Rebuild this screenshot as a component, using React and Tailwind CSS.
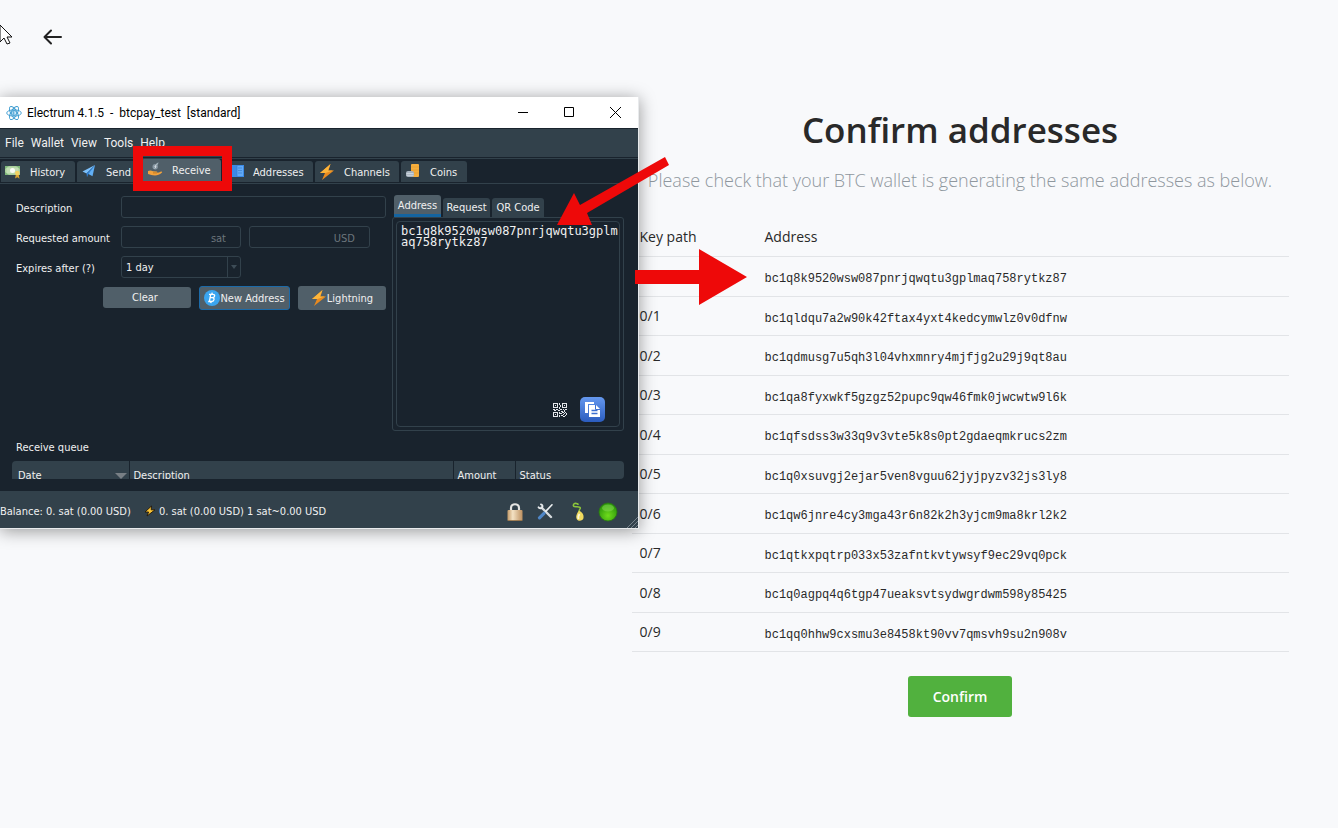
const addresses = [
  'bc1q8k9520wsw087pnrjqwqtu3gplmaq758rytkz87',
  'bc1qldqu7a2w90k42ftax4yxt4kedcymwlz0v0dfnw',
  'bc1qdmusg7u5qh3l04vhxmnry4mjfjg2u29j9qt8au',
  'bc1qa8fyxwkf5gzgz52pupc9qw46fmk0jwcwtw9l6k',
  'bc1qfsdss3w33q9v3vte5k8s0pt2gdaeqmkrucs2zm',
  'bc1q0xsuvgj2ejar5ven8vguu62jyjpyzv32js3ly8',
  'bc1qw6jnre4cy3mga43r6n82k2h3yjcm9ma8krl2k2',
  'bc1qtkxpqtrp033x53zafntkvtywsyf9ec29vq0pck',
  'bc1q0agpq4q6tgp47ueaksvtsydwgrdwm598y85425',
  'bc1qq0hhw9cxsmu3e8458kt90vv7qmsvh9su2n908v',
];

/* ---------- Icons ---------- */

const BackIcon = () => (
  <svg width="19" height="16" viewBox="0 0 19 16" fill="none" stroke="#222" strokeWidth="2" strokeLinecap="round" strokeLinejoin="round">
    <path d="M18 8H2M8 1.500L1.500 8 8 14.500" />
  </svg>
);

const ElectrumIcon = () => (
  <svg width="16" height="16" viewBox="0 0 16 16" fill="none" stroke="#3b9bd0" strokeWidth="0.9">
    <ellipse cx="8" cy="8" rx="7.3" ry="3.2" />
    <ellipse cx="8" cy="8" rx="7.3" ry="3.2" transform="rotate(60 8 8)" />
    <ellipse cx="8" cy="8" rx="7.3" ry="3.2" transform="rotate(120 8 8)" />
    <circle cx="8" cy="8" r="2.6" fill="#d8eefa" />
    <path d="M7.2 6.6v2.8M7.2 6.7h1.2M7.2 8h1.4M7.2 9.3h1.4" strokeWidth="0.8" />
  </svg>
);

const HistoryIcon = () => (
  <svg width="16" height="16" viewBox="0 0 16 16">
    <rect x="0" y="2" width="15" height="9" fill="#a9cf9c" />
    <rect x="1.5" y="3.5" width="12" height="6" fill="#c3dfb5" />
    <circle cx="7.5" cy="6.5" r="2.5" fill="#fbfdf8" />
    <path d="M0 2h4L0 5zM15 2h-4l4 3zM0 11h4L0 8z" fill="#7fb87a" />
    <path d="M11 10l-1 4.5 2.3-1.2 2.2 1.4-.8-4.7z" fill="#d9a32f" />
    <circle cx="12.3" cy="9" r="2.3" fill="#f2d264" />
  </svg>
);

const SendIcon = () => (
  <svg width="16" height="16" viewBox="0 0 16 16">
    <path d="M14 1L1.500 7.500l4 2z" fill="#7cc0fb" />
    <path d="M14 1L6.500 9.500l5 2.800z" fill="#62b0f6" />
    <path d="M5.500 9.500L14 1 7.300 10.300l-1.300 3z" fill="#2f7fd2" />
  </svg>
);

const ReceiveIcon = () => (
  <svg width="16" height="16" viewBox="0 0 16 16">
    <path d="M8 2.500L11.500.3l-.6 2.500z" fill="#9fb0bb" />
    <circle cx="8.200" cy="4.800" r="2.700" fill="#8797a3" />
    <path d="M9.500 2.500L7.800 4.600h1.300L7.800 6.500" stroke="#e2e8ec" strokeWidth="0.8" fill="none" />
    <path d="M1 9c2-1 3.400-.6 5 .3l3.500.3c1 .1 1 1 0 1.200l2.500-.2 2-1c1.200-.3 1.500.7.8 1.200-2.300 1.800-4.300 2.600-6.800 2.600-3 0-4.500-1-7-1.500z" fill="#f2a23c" />
    <path d="M6 10.900h4" stroke="#b8701b" strokeWidth="0.8" />
  </svg>
);

const AddressesIcon = () => (
  <svg width="16" height="16" viewBox="0 0 16 16">
    <rect x="1" y="1" width="15" height="12" fill="#3b8ae6" />
    <rect x="9" y="2" width="6" height="10" fill="#62aaf6" />
    <path d="M9 1v12M10 4h4M10 6.500h4M10 9h4" stroke="#3a7fd0" strokeWidth="0.7" />
  </svg>
);

const BoltIcon = () => (
  <svg width="16" height="16" viewBox="0 0 16 16">
    <path d="M11.500 0L1 9h5l-3 7L15 6.500H9.500z" fill="#e98a1f" />
    <path d="M11.500 0L1 9h5.500L14 6.500H9z" fill="#fcb53b" />
  </svg>
);

const SmallBoltIcon = () => (
  <svg width="12" height="12" viewBox="0 0 12 12">
    <path d="M7.500 1L1 7h3.600L3 11l8-6.200H7.200z" fill="#f9c335" stroke="#20160a" strokeWidth="0.9" />
  </svg>
);

const CoinsIcon = () => (
  <svg width="16" height="16" viewBox="0 0 16 16">
    <rect x="6" y="0" width="8" height="13" rx="1" fill="#f6ae3c" />
    <path d="M6 3h8M6 6h8M6 9h8" stroke="#e39a30" strokeWidth="0.6" />
    <rect x="1" y="7" width="8" height="6" rx="2" fill="#a7b3bf" />
    <path d="M1.500 9.500h7M1.500 11.300h7" stroke="#dbe2e8" strokeWidth="0.7" />
  </svg>
);

const BitcoinIcon = () => (
  <svg width="16" height="16" viewBox="0 0 16 16">
    <circle cx="8" cy="8" r="8" fill="#3aa5f0" />
    <path
      d="M6.700 4.300L5.400 11.500M5 4.300h3.800c2.600 0 2.400 3.300-.4 3.400H6.200M8.400 7.700c2.600.2 2 3.800-.8 3.800H4.200M8.200 2.700L7.900 4.200M7.100 11.600l-.3 1.500"
      fill="none"
      stroke="#fff"
      strokeWidth="1.300"
    />
  </svg>
);

const QrIcon = () => (
  <svg width="14" height="14" viewBox="0 0 14 14" fill="#e4e7ea" shapeRendering="crispEdges">
    <path
      fillRule="evenodd"
      d="M0 0h5v5H0zM1 1v3h3V1zM9 0h5v5H9zM10 1v3h3V1zM0 9h5v5H0zM1 10v3h3v-3z"
    />
    <path d="M2 2h1v1H2zM11 2h1v1h-1zM2 11h1v1H2zM6 0h1v2H6zM7 2h1v2H7zM6 4h1v2H6zM0 6h2v1H0zM3 6h2v1H3zM1 7h2v1H1zM5 7h2v1H5zM7 6h2v1H7zM10 6h1v1h-1zM12 6h2v1h-2zM8 8h2v1H8zM11 7h1v2h-1zM6 9h1v2H6zM7 10h2v1H7zM9 9h2v1H9zM12 9h1v1h-1zM10 11h1v1h-1zM11 10h1v1h-1zM13 10h1v2h-1zM8 12h2v1H8zM6 12h1v2H6zM11 13h1v1h-1zM12 12h1v1h-1zM10 13h1v1h-1z" />
  </svg>
);

const CopyIcon = () => (
  <svg width="25" height="25" viewBox="0 0 25 25">
    <defs>
      <linearGradient id="copyFill" x1="0" y1="0" x2="0" y2="1">
        <stop offset="0" stopColor="#6598ee" />
        <stop offset="1" stopColor="#2b5cbe" />
      </linearGradient>
    </defs>
    <rect width="25" height="25" rx="5" fill="url(#copyFill)" />
    <path d="M5 5h9v2H8v9H5z" fill="#fff" />
    <path d="M9 8h7l4 4v8H9z" fill="#fff" />
    <path d="M11.500 13.500h6M11.500 16.500h6" stroke="#3c6fd0" strokeWidth="1.300" />
    <path d="M15.500 8v4.500H20" fill="none" stroke="#3c6fd0" />
  </svg>
);

const LockIcon = () => (
  <svg width="18" height="20" viewBox="0 0 18 20">
    <defs>
      <linearGradient id="lockBody" x1="0" y1="0" x2="1" y2="0">
        <stop offset="0" stopColor="#c39a68" />
        <stop offset="0.350" stopColor="#f4e2c4" />
        <stop offset="1" stopColor="#bd9060" />
      </linearGradient>
    </defs>
    <path d="M5 10V6c0-5 8-5 8 0v4" fill="none" stroke="#e4e4e2" strokeWidth="2.200" />
    <rect x="1.500" y="8" width="15" height="11" rx="1" fill="url(#lockBody)" />
    <path d="M2 18.500h14" stroke="#8d6a40" strokeWidth="0.800" />
  </svg>
);

const ToolsIcon = () => (
  <svg width="17" height="17" viewBox="0 0 17 17" fill="none" strokeLinecap="round">
    <path d="M4.500 4.500L14 14" stroke="#d7dbde" strokeWidth="2.400" />
    <path d="M1.500 4.200c1.200 1.900 3.500 1.500 4-.4C5.700 2.300 4.800 1.500 3.900 1.300" stroke="#e6e9eb" strokeWidth="1.800" />
    <path d="M15 1.800L8.500 8.600" stroke="#eceff1" strokeWidth="1.600" />
    <path d="M7 10.300l-4.500 4.500" stroke="#4f86c6" strokeWidth="3.200" />
  </svg>
);

const SeedIcon = () => (
  <svg width="14" height="20" viewBox="0 0 14 20">
    <path d="M8.500 11C7 8 9.500 7.500 9.300 5.800 9 4 5.500 5 3.200 4.600 1.500 4 2.500 1.500 4.500 1.300c1.500 0 1.800 1 3.200.9" fill="none" stroke="#8cc63a" strokeWidth="1.500" />
    <path d="M8 8.500c3.500 1.500 5 4.500 4.500 7.500-.5 3-5 3.700-6.500 1.500-1.700-2.500-.4-6 2-9z" fill="#f0d95e" />
    <path d="M8.500 12c-1.300 2-1.600 3.600-.8 5" fill="none" stroke="#fff9d8" strokeWidth="1.800" />
  </svg>
);

const StatusIcon = () => (
  <svg width="20" height="20" viewBox="0 0 20 20">
    <defs>
      <radialGradient id="statusFill" cx="0.500" cy="0.700" r="0.600">
        <stop offset="0" stopColor="#6fdc1c" />
        <stop offset="1" stopColor="#2f9a0c" />
      </radialGradient>
    </defs>
    <circle cx="10" cy="10" r="9" fill="url(#statusFill)" stroke="#2a7a12" strokeWidth="0.800" />
    <ellipse cx="10" cy="6" rx="6" ry="3.500" fill="#8ade5a" opacity="0.500" />
  </svg>
);

/* ---------- Electrum window ---------- */

const menus = ['File', 'Wallet', 'View', 'Tools', 'Help'];

const tabs = [
  { label: 'History', icon: <HistoryIcon />, size: 'w-[74px] pl-1' },
  { label: 'Send', icon: <SendIcon />, size: 'w-[62px] pl-1' },
  { label: 'Receive', icon: <ReceiveIcon />, size: 'w-[80px] pl-[6px]', active: true },
  { label: 'Addresses', icon: <AddressesIcon />, size: 'w-[90px] pl-[5px]' },
  { label: 'Channels', icon: <BoltIcon />, size: 'w-[84px] pl-1' },
  { label: 'Coins', icon: <CoinsIcon />, size: 'w-[66px] pl-1' },
];

const fieldClass = 'h-[22px] rounded-[3px] border border-[#32414b] bg-[#19232d] px-1 pt-[2px] text-[#f0f0f0]';
const labelClass = 'w-[105px] pt-[3px]';
const buttonClass = 'flex items-center justify-center rounded-[3px] bg-[#505f69] text-[#f0f0f0]';

const TitleBar = () => (
  <div className="flex h-[31px] items-center bg-white pl-[6px] text-black">
    <ElectrumIcon />
    <span className="ml-[5px] flex-1 whitespace-pre font-[Roboto,sans-serif] text-[12px]">
      {'Electrum 4.1.5  -  btcpay_test  [standard]'}
    </span>
    <button aria-label="Minimize" className="flex h-full w-[46px] items-center justify-center">
      <svg width="11" height="11" stroke="#000"><path d="M0 5.500h10" /></svg>
    </button>
    <button aria-label="Maximize" className="flex h-full w-[46px] items-center justify-center">
      <svg width="11" height="11" stroke="#000" fill="none"><path d="M.5.5h9v9h-9z" /></svg>
    </button>
    <button aria-label="Close" className="flex h-full w-[46px] items-center justify-center">
      <svg width="11" height="11" stroke="#000"><path d="M0 0l11 11M11 0L0 11" /></svg>
    </button>
  </div>
);

const ReceiveForm = () => (
  <form className="w-[386px] pl-4 pt-3" onSubmit={(e) => e.preventDefault()}>
    <div className="flex flex-col gap-2">
      <div className="flex items-center">
        <label htmlFor="description" className={labelClass}>Description</label>
        <input id="description" className={`${fieldClass} w-[265px]`} />
      </div>
      <div className="flex items-center">
        <label htmlFor="amount" className={labelClass}>Requested amount</label>
        <input id="amount" placeholder="sat" className={`${fieldClass} w-[120px] pr-[14px] text-right placeholder:text-[#6c757c]`} />
        <input aria-label="Amount in USD" placeholder="USD" className={`${fieldClass} ml-2 w-[121px] pr-[14px] text-right placeholder:text-[#6c757c]`} />
      </div>
      <div className="flex items-center">
        <label htmlFor="expires" className={labelClass}>Expires after (?)</label>
        <div className="relative">
          <select id="expires" className={`${fieldClass} w-[120px] appearance-none`}>
            <option>1 day</option>
          </select>
          <span className="pointer-events-none absolute inset-y-px right-px flex w-[13px] items-center justify-center border-l border-[#32414b]">
            <svg width="6" height="4" fill="#3d4c57"><path d="M0 0h6L3 4z" /></svg>
          </span>
        </div>
      </div>
    </div>
    <div className="mt-2 flex items-start justify-end gap-2">
      <button className={`${buttonClass} mt-px h-[21px] w-[88px] pr-1`}>Clear</button>
      <button className={`${buttonClass} h-6 w-[91px] border border-[#1c6aa8]`}>
        <BitcoinIcon />
        <span className="pt-[2px]">New Address</span>
      </button>
      <button className={`${buttonClass} h-6 w-[88px]`}>
        <BoltIcon />
        <span className="pt-[2px]">Lightning</span>
      </button>
    </div>
  </form>
);

const AddressPanel = () => (
  <div className="ml-[6px] flex w-[232px] flex-col pt-[11px]">
    <div className="flex items-end gap-[2px] pl-[2px]">
      <button className="h-[22px] w-[47px] rounded-t-[3px] border-b-[3px] border-[#1464a0] bg-[#505f69] pt-[2px]">Address</button>
      <button className="h-[19px] w-[47px] rounded-t-[3px] bg-[#32414b]">Request</button>
      <button className="h-[19px] w-[52px] rounded-t-[3px] bg-[#32414b]">QR Code</button>
    </div>
    <div className="flex-1 rounded-[3px] border border-[#32414b] p-[3px]">
      <div className="flex h-full flex-col justify-between rounded-[4px] border border-[#32414b] pb-1 pl-1 pt-1">
        <p className="break-all font-['DejaVu_Sans_Mono','Liberation_Mono',monospace] text-[12px] leading-[11px]">
          bc1q8k9520wsw087pnrjqwqtu3gplmaq758rytkz87
        </p>
        <div className="flex items-center justify-end gap-[13px] pr-[14px]">
          <button aria-label="Show QR code"><QrIcon /></button>
          <button aria-label="Copy address"><CopyIcon /></button>
        </div>
      </div>
    </div>
  </div>
);

const ReceiveQueue = () => (
  <div className="pl-3 pr-[14px]">
    <h2 className="flex h-[30px] items-center pl-1 pt-1">Receive queue</h2>
    <div className="h-[18px] overflow-hidden rounded-t-[4px] rounded-br-[4px]">
      <table className="w-full table-fixed border-collapse bg-[#32414b] text-left">
        <thead>
          <tr className="h-[30px]">
            <th className="w-[117px] border-r border-[#19232d] pl-[6px] font-normal">
              <span className="flex items-center justify-between pr-[2px]">
                Date
                <svg width="12" height="6" fill="#787f85"><path d="M0 0h12L6 6z" /></svg>
              </span>
            </th>
            <th className="border-r border-[#19232d] pl-1 font-normal">Description</th>
            <th className="w-[62px] border-r border-[#19232d] pl-1 font-normal">Amount</th>
            <th className="w-[109px] pl-1 font-normal">Status</th>
          </tr>
        </thead>
      </table>
    </div>
  </div>
);

const StatusBar = () => (
  <div className="flex h-[37px] items-center bg-[#32414b]">
    <span className="w-36 whitespace-nowrap pt-1">Balance: 0. sat (0.00 USD)</span>
    <span className="pt-[3px]"><SmallBoltIcon /></span>
    <span className="ml-[3px] flex-1 whitespace-nowrap pt-1">0. sat (0.00 USD) 1 sat~0.00 USD</span>
    <div className="flex items-center gap-[13px] pt-1">
      <button aria-label="Password"><LockIcon /></button>
      <button aria-label="Preferences"><ToolsIcon /></button>
      <button aria-label="Seed" className="ml-1"><SeedIcon /></button>
      <button aria-label="Network"><StatusIcon /></button>
    </div>
    <svg className="ml-[9px] self-end" width="11" height="11" stroke="#76828b"><path d="M0 11L11 0M4 11l7-7M8 11l3-3" /></svg>
  </div>
);

const ElectrumWindow = () => (
  <section className="absolute left-0 top-[97px] w-[639px] border-b border-r border-[#e8eaec] bg-[#19232d] font-['DejaVu_Sans_Condensed','DejaVu_Sans',sans-serif] text-[11px] leading-[14px] text-[#f0f0f0] shadow-[0_2px_16px_rgba(0,0,0,0.4)]">
    <TitleBar />
    <nav className="flex h-[30px] items-center gap-[7px] border-b border-t border-[#19232d] bg-[#32414b] pl-[5px] font-[Roboto,sans-serif] text-[12px]">
      {menus.map((item) => (
        <button key={item}>{item}</button>
      ))}
    </nav>
    <div className="flex h-[25px] items-end gap-[2px] border-t border-[#32414b] pb-px pl-px">
      {tabs.map((tab) => (
        <button
          key={tab.label}
          className={`flex items-center gap-[9px] rounded-t-[3px] ${tab.size} ${
            tab.active ? 'mb-px h-[22px] bg-[#505f69]' : 'h-[21px] bg-[#32414b]'
          }`}
        >
          {tab.icon}
          <span className="pt-[2px]">{tab.label}</span>
        </button>
      ))}
    </div>
    <div className="flex h-[248px] border-t border-[#32414b]">
      <ReceiveForm />
      <AddressPanel />
    </div>
    <ReceiveQueue />
    <div className="h-3" />
    <StatusBar />
  </section>
);

/* ---------- Annotations drawn over the window ---------- */

const Annotations = () => (
  <>
    <div className="absolute left-[133px] top-[146px] h-[45px] w-[99px] border-[10px] border-[#ee0909]" />
    <svg className="pointer-events-none absolute left-[550px] top-[150px]" width="200" height="160" fill="#ee0909">
      <path d="M115 7l4 8-82 48 5 12H7L24 43l6 12z" />
      <path d="M85 120h64V99l48 28-48 28v-21H85z" />
    </svg>
  </>
);

const Cursor = () => (
  <svg className="absolute left-0 top-[25px]" width="13" height="20">
    <path d="M0 0l12 12H7l3 6-3 1-3-6-4 4z" fill="#fff" stroke="#111" strokeWidth="1" />
  </svg>
);

const App = () => (
  <main className="relative min-h-screen bg-[#f8f9fb] font-['Open_Sans','Noto_Sans',sans-serif] text-[14px] text-[#292929]">
    <header className="flex h-[74px] items-center pl-[43px]">
      <a href="#back" aria-label="Back">
        <BackIcon />
      </a>
    </header>

    <div className="flex flex-col items-center pl-[582px]">
      <h1 className="mt-8 text-[35px] font-semibold leading-[48px]">Confirm addresses</h1>
      <p className="mt-3 whitespace-nowrap text-[18px] font-light leading-7 text-[#8f979e]">
        Please check that your BTC wallet is generating the same addresses as below.
      </p>

      <table className="mt-6 w-full max-w-[657px] table-fixed border-collapse text-left">
        <thead>
          <tr className="h-[38px] border-b border-[#e2e4e7]">
            <th className="w-[125px] pl-2 font-normal">Key path</th>
            <th className="pl-2 font-normal">Address</th>
          </tr>
        </thead>
        <tbody>
          {addresses.map((address, index) => (
            <tr key={address} className="h-[39px] border-b border-[#e2e4e7] odd:h-10">
              <td className="pl-2">0/{index}</td>
              <td className="pl-2 pt-[6px] font-['Liberation_Mono',monospace] text-[12px]">{address}</td>
            </tr>
          ))}
        </tbody>
      </table>

      <button className="mt-6 h-[41px] w-[104px] rounded-[3px] bg-[#51b13e] font-semibold text-white">
        Confirm
      </button>
    </div>

    <ElectrumWindow />
    <Annotations />
    <Cursor />
  </main>
);

export default App;
